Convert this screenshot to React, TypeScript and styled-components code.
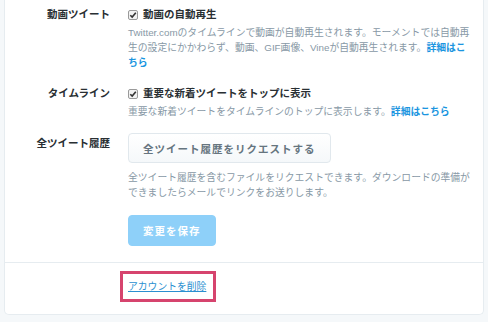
import React from "react";
import styled, { createGlobalStyle } from "styled-components";

const GlobalStyle = createGlobalStyle`
  body {
    margin: 0;
    background: #f5f8fa;
    font-family: "Liberation Sans", "Noto Sans CJK JP", sans-serif;
    color: #292f33;
  }
`;

const Page = styled.div`
  padding: 0 4px 5px 4px;
`;

const Card = styled.div`
  width: 478px;
  background: #fff;
  border: 1px solid #e6ecf0;
  border-top: none;
  border-radius: 0 0 5px 5px;
`;

const Form = styled.div`
  padding: 7px 0 16px;
  border-bottom: 1px solid #e6ecf0;
`;

const Footer = styled.div`
  padding: 16px 0 20px;
`;

const Row = styled.div<{ $gap?: number }>`
  display: grid;
  grid-template-columns: 105px 349px;
  column-gap: 18px;
  margin-top: ${(p) => p.$gap ?? 0}px;
`;

const Label = styled.div<{ $offset?: number }>`
  text-align: right;
  font-size: 10.5px;
  font-weight: bold;
  line-height: 15px;
  padding-top: ${(p) => p.$offset ?? 0}px;
  color: #292f33;
`;

const Field = styled.div`
  display: flex;
  flex-direction: column;
  align-items: flex-start;
`;

const CheckLine = styled.label`
  display: flex;
  align-items: center;
  gap: 5px;
  font-size: 10.5px;
  font-weight: bold;
  line-height: 15px;
`;

const Help = styled.p<{ $top?: number }>`
  margin: ${(p) => p.$top ?? 3}px 0 0;
  font-size: 9.8px;
  line-height: 15px;
  color: #8899a6;
`;

const More = styled.a`
  color: #1b95e0;
  font-weight: bold;
  text-decoration: none;
`;

const Button = styled.button<{ $primary?: boolean }>`
  height: ${(p) => (p.$primary ? 31 : 30)}px;
  padding: 0 14px;
  border-radius: 4px;
  font-family: inherit;
  font-weight: bold;
  letter-spacing: 1px;
  font-size: 10.5px;
  border: 1px solid ${(p) => (p.$primary ? "#8ed0f9" : "#e1e8ed")};
  color: ${(p) => (p.$primary ? "#fff" : "#66757f")};
  background: ${(p) =>
    p.$primary ? "#8ed0f9" : "linear-gradient(#fff, #f5f8fa)"};
`;

const SaveWrap = styled.div`
  margin-top: 15px;
`;

const DangerLink = styled.a`
  display: inline-block;
  font-size: 9.8px;
  line-height: 15px;
  color: #2b8fd0;
  text-decoration: underline;
  padding-right: 2px;
  outline: 3px solid #d6446e;
  outline-offset: 5px;
`;

const Check = () => (
  <svg width="10" height="10" viewBox="0 0 10 10">
    <rect x="0.5" y="0.5" width="9" height="9" rx="1.5" fill="#f2f2f2" stroke="#9a9a9a" />
    <path d="M2.3 5.2 L4.2 7.1 L7.8 2.7" fill="none" stroke="#333" strokeWidth="1.6" />
  </svg>
);

export default function App() {
  return (
    <Page>
      <GlobalStyle />
      <Card>
        <Form>
          <Row>
            <Label>動画ツイート</Label>
            <Field>
              <CheckLine>
                <Check />
                動画の自動再生
              </CheckLine>
              <Help>
                Twitter.comのタイムラインで動画が自動再生されます。モーメントでは自動再
                <br />
                生の設定にかかわらず、動画、GIF画像、Vineが自動再生されます。
                <More>
                  詳細はこ
                  <br />
                  ちら
                </More>
              </Help>
            </Field>
          </Row>
          <Row $gap={16}>
            <Label>タイムライン</Label>
            <Field>
              <CheckLine>
                <Check />
                重要な新着ツイートをトップに表示
              </CheckLine>
              <Help>
                重要な新着ツイートをタイムラインのトップに表示します。
                <More>詳細はこちら</More>
              </Help>
            </Field>
          </Row>
          <Row $gap={14}>
            <Label $offset={3}>全ツイート履歴</Label>
            <Field>
              <Button>全ツイート履歴をリクエストする</Button>
              <Help $top={7}>
                全ツイート履歴を含むファイルをリクエストできます。ダウンロードの準備ができましたらメールでリンクをお送りします。
              </Help>
              <SaveWrap>
                <Button $primary>変更を保存</Button>
              </SaveWrap>
            </Field>
          </Row>
        </Form>
        <Footer>
          <Row>
            <Label />
            <Field>
              <DangerLink>アカウントを削除</DangerLink>
            </Field>
          </Row>
        </Footer>
      </Card>
    </Page>
  );
}
